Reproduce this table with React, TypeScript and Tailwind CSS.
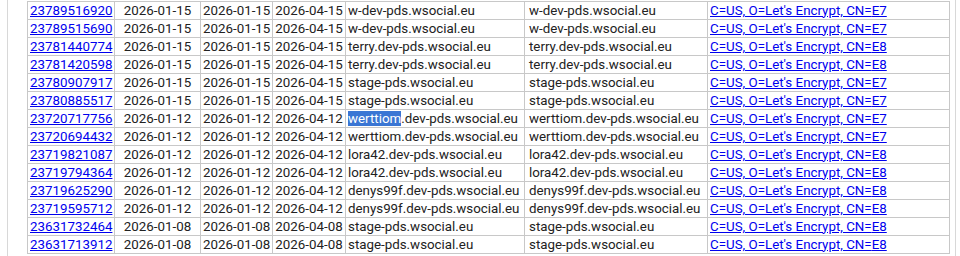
type Row = {
  id: string
  logged: string
  notBefore: string
  notAfter: string
  cn: string
  issuer: string
}

const rows: Row[] = [
  { id: '23789516920', logged: '2026-01-15', notBefore: '2026-01-15', notAfter: '2026-04-15', cn: 'w-dev-pds.wsocial.eu', issuer: 'E7' },
  { id: '23789515690', logged: '2026-01-15', notBefore: '2026-01-15', notAfter: '2026-04-15', cn: 'w-dev-pds.wsocial.eu', issuer: 'E7' },
  { id: '23781440774', logged: '2026-01-15', notBefore: '2026-01-15', notAfter: '2026-04-15', cn: 'terry.dev-pds.wsocial.eu', issuer: 'E8' },
  { id: '23781420598', logged: '2026-01-15', notBefore: '2026-01-15', notAfter: '2026-04-15', cn: 'terry.dev-pds.wsocial.eu', issuer: 'E8' },
  { id: '23780907917', logged: '2026-01-15', notBefore: '2026-01-15', notAfter: '2026-04-15', cn: 'stage-pds.wsocial.eu', issuer: 'E7' },
  { id: '23780885517', logged: '2026-01-15', notBefore: '2026-01-15', notAfter: '2026-04-15', cn: 'stage-pds.wsocial.eu', issuer: 'E7' },
  { id: '23720717756', logged: '2026-01-12', notBefore: '2026-01-12', notAfter: '2026-04-12', cn: 'werttiom.dev-pds.wsocial.eu', issuer: 'E7' },
  { id: '23720694432', logged: '2026-01-12', notBefore: '2026-01-12', notAfter: '2026-04-12', cn: 'werttiom.dev-pds.wsocial.eu', issuer: 'E7' },
  { id: '23719821087', logged: '2026-01-12', notBefore: '2026-01-12', notAfter: '2026-04-12', cn: 'lora42.dev-pds.wsocial.eu', issuer: 'E8' },
  { id: '23719794364', logged: '2026-01-12', notBefore: '2026-01-12', notAfter: '2026-04-12', cn: 'lora42.dev-pds.wsocial.eu', issuer: 'E8' },
  { id: '23719625290', logged: '2026-01-12', notBefore: '2026-01-12', notAfter: '2026-04-12', cn: 'denys99f.dev-pds.wsocial.eu', issuer: 'E8' },
  { id: '23719595712', logged: '2026-01-12', notBefore: '2026-01-12', notAfter: '2026-04-12', cn: 'denys99f.dev-pds.wsocial.eu', issuer: 'E8' },
  { id: '23631732464', logged: '2026-01-08', notBefore: '2026-01-08', notAfter: '2026-04-08', cn: 'stage-pds.wsocial.eu', issuer: 'E8' },
  { id: '23631713912', logged: '2026-01-08', notBefore: '2026-01-08', notAfter: '2026-04-08', cn: 'stage-pds.wsocial.eu', issuer: 'E8' },
]

const td = 'border border-[#c8c8c8] px-[2px] py-0 h-[18px] leading-[16px] whitespace-nowrap overflow-hidden'

export default function App() {
  return (
    <div className="h-[256px] w-[960px] overflow-hidden bg-white font-['Roboto',sans-serif] text-[13.33px] text-[#222]">
      <div className="ml-[7px] h-full w-[949px] border-x border-[#d8d8d8] pl-[19px] pr-[6px] pt-[1px]">
        {/* certificate search results */}
        <table className="w-[922px] table-fixed border-collapse">
          <colgroup>
            <col className="w-[87px]" />
            <col className="w-[86px]" />
            <col className="w-[72px]" />
            <col className="w-[73px]" />
            <col className="w-[179px]" />
            <col className="w-[183px]" />
            <col className="w-[242px]" />
          </colgroup>
          <tbody>
            {rows.map((r, i) => (
              <tr key={r.id}>
                <td className={`${td} text-center`}>
                  <a href="#" className="text-[#0000ee] underline">{r.id}</a>
                </td>
                <td className={`${td} text-center`}>{r.logged}</td>
                <td className={`${td} text-center`}>{r.notBefore}</td>
                <td className={`${td} text-center`}>{r.notAfter}</td>
                <td className={td}>
                  {i === 6 ? (
                    <>
                      <span className="bg-[#3a76d4] text-white">werttiom</span>.dev-pds.wsocial.eu
                    </>
                  ) : (
                    r.cn
                  )}
                </td>
                <td className={`${td} pl-[4px]`}>{r.cn}</td>
                <td className={td}>
                  <a href="#" className="text-[#0000ee] underline">
                    C=US, O=Let's Encrypt, CN={r.issuer}
                  </a>
                </td>
              </tr>
            ))}
          </tbody>
        </table>
      </div>
    </div>
  )
}
